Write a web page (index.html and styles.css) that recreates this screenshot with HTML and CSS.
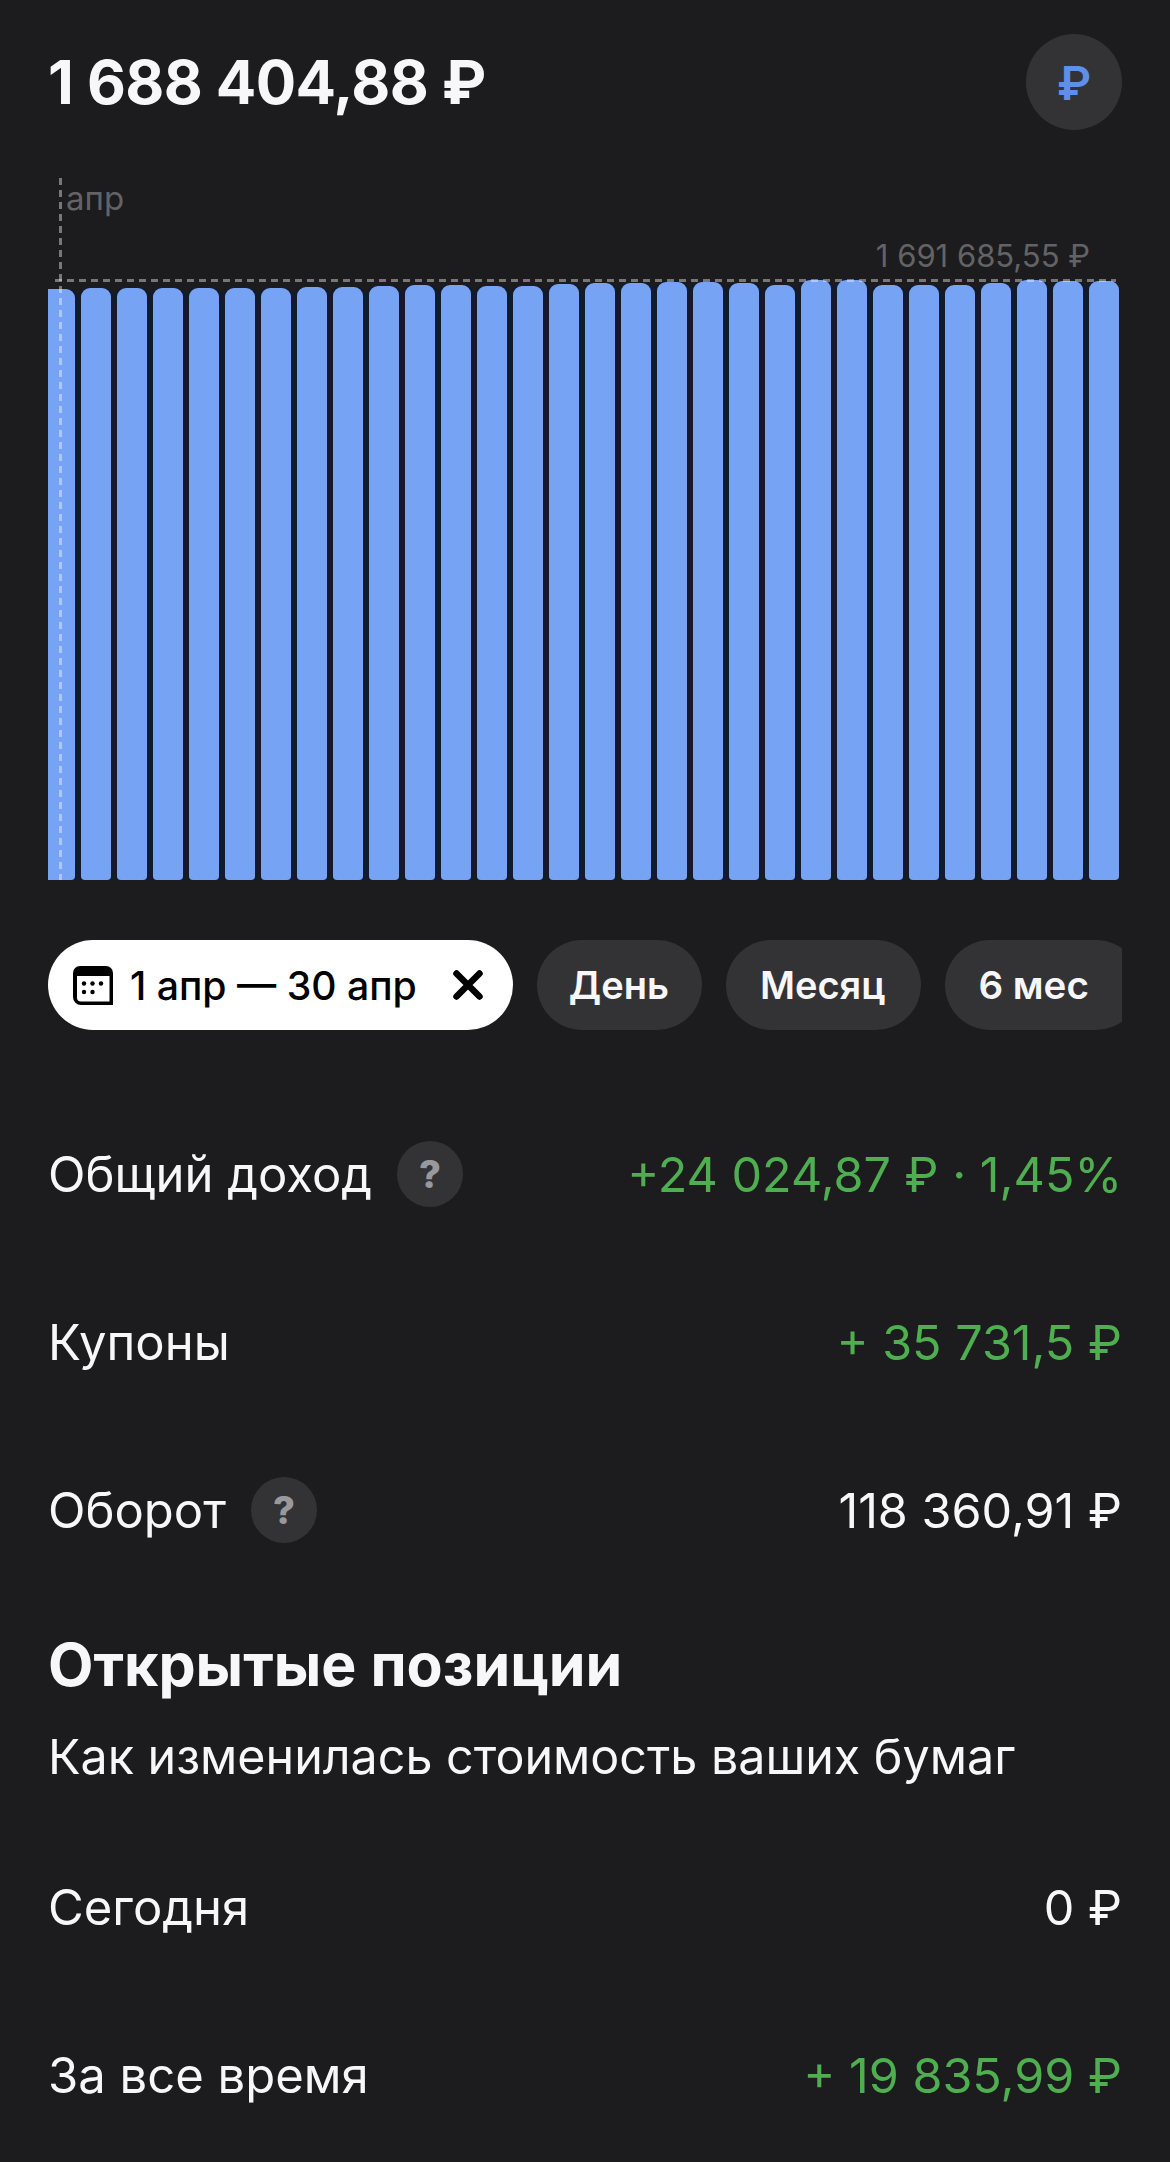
FILE: index.html
```html
<!DOCTYPE html>
<html lang="ru">
<head>
<meta charset="utf-8">
<title>Доходность</title>
<link rel="stylesheet" href="styles.css">
</head>
<body>
<main class="page">
  <header class="header">
    <h1 class="balance">1&nbsp;688&nbsp;404,88&nbsp;₽</h1>
    <div class="currency"><span>₽</span></div>
  </header>

  <section class="chart">
    <div class="bars">
      <div class="bar bar-first" style="height:591px"></div>
      <div class="bar" style="height:592px"></div>
      <div class="bar" style="height:592px"></div>
      <div class="bar" style="height:592px"></div>
      <div class="bar" style="height:592px"></div>
      <div class="bar" style="height:592px"></div>
      <div class="bar" style="height:592px"></div>
      <div class="bar" style="height:593px"></div>
      <div class="bar" style="height:593px"></div>
      <div class="bar" style="height:594px"></div>
      <div class="bar" style="height:595px"></div>
      <div class="bar" style="height:595px"></div>
      <div class="bar" style="height:594px"></div>
      <div class="bar" style="height:594px"></div>
      <div class="bar" style="height:596px"></div>
      <div class="bar" style="height:597px"></div>
      <div class="bar" style="height:597px"></div>
      <div class="bar" style="height:598px"></div>
      <div class="bar" style="height:598px"></div>
      <div class="bar" style="height:597px"></div>
      <div class="bar" style="height:595px"></div>
      <div class="bar" style="height:600px"></div>
      <div class="bar" style="height:600px"></div>
      <div class="bar" style="height:595px"></div>
      <div class="bar" style="height:595px"></div>
      <div class="bar" style="height:595px"></div>
      <div class="bar" style="height:597px"></div>
      <div class="bar" style="height:600px"></div>
      <div class="bar" style="height:599px"></div>
      <div class="bar bar-last" style="height:599px"></div>
    </div>
    <div class="guide-v"></div>
    <div class="guide-h"></div>
    <span class="label-month">апр</span>
    <span class="label-max">1&nbsp;691&nbsp;685,55&nbsp;₽</span>
  </section>

  <nav class="chips">
    <div class="chip chip-active">
      <svg class="icon-cal" viewBox="0 0 40 39" aria-hidden="true">
        <path d="M7 0H33A7 7 0 0 1 40 7V39H8A8 8 0 0 1 0 31V7A7 7 0 0 1 7 0Z" fill="#000"/>
        <path d="M4 10H36.500V35.500H8A4 4 0 0 1 4 31.500Z" fill="#fff"/>
        <g fill="#000"><circle cx="11" cy="17.500" r="2.200"/><circle cx="19.500" cy="17.500" r="2.200"/><circle cx="28" cy="17.500" r="2.200"/><circle cx="11" cy="26" r="2.200"/><circle cx="19.500" cy="26" r="2.200"/></g>
      </svg>
      <span class="chip-text">1 апр — 30 апр</span>
      <svg class="icon-close" viewBox="0 0 30 30" aria-hidden="true">
        <path d="M3.500 3.500L26.500 26.500M26.500 3.500L3.500 26.500" stroke="#000" stroke-width="6.500" stroke-linecap="round" fill="none"/>
      </svg>
    </div>
    <div class="chip chip-day">День</div>
    <div class="chip chip-month">Месяц</div>
    <div class="chip chip-cut">6 мес</div>
  </nav>

  <section class="rows rows-top">
    <div class="row">
      <div class="row-label">Общий доход <span class="hint">?</span></div>
      <div class="row-value positive">+24&nbsp;024,87&nbsp;₽ · 1,45%</div>
    </div>
    <div class="row">
      <div class="row-label">Купоны</div>
      <div class="row-value positive">+ 35&nbsp;731,5&nbsp;₽</div>
    </div>
    <div class="row">
      <div class="row-label">Оборот <span class="hint">?</span></div>
      <div class="row-value">118&nbsp;360,91&nbsp;₽</div>
    </div>
  </section>

  <section class="positions">
    <h2 class="positions-title">Открытые позиции</h2>
    <p class="positions-sub">Как изменилась стоимость ваших бумаг</p>
  </section>

  <section class="rows">
    <div class="row">
      <div class="row-label">Сегодня</div>
      <div class="row-value">0&nbsp;₽</div>
    </div>
    <div class="row">
      <div class="row-label">За все время</div>
      <div class="row-value positive">+ 19&nbsp;835,99&nbsp;₽</div>
    </div>
  </section>
</main>
</body>
</html>
```
FILE: styles.css
```css
* { box-sizing: border-box; }
html, body { margin: 0; padding: 0; }
body {
  background: #1c1c1e;
  color: #f7f7f9;
  font-family: Inter, "Noto Sans", sans-serif;
}
.page { width: 1170px; height: 2162px; overflow: hidden; }

.header {
  display: flex;
  justify-content: space-between;
  align-items: center;
  padding: 34px 48px 0 48px;
}
.balance { margin: 0; font-size: 60px; font-weight: 700; line-height: 96px; letter-spacing: -0.6px; }
.currency {
  width: 96px;
  height: 96px;
  border-radius: 50%;
  background: #333336;
  color: #5f8fe8;
  font-size: 47px;
  font-weight: 600;
  display: flex;
  align-items: center;
  justify-content: center;
}

.chart { position: relative; height: 702px; margin-top: 48px; padding-left: 48px; }
.bars { display: flex; align-items: flex-end; gap: 6px; height: 100%; width: 1071px; }
.bar {
  flex: 0 0 30px;
  background: #77a3f5;
  border-radius: 9px 9px 4px 4px;
  box-shadow: 3px 0 0 #121a2c, -3px 0 0 #121a2c;
}
.bar-first { flex-basis: 27px; border-radius: 0 9px 4px 0; box-shadow: 3px 0 0 #121a2c; }
.bar-last { box-shadow: -3px 0 0 #121a2c; }
.guide-v {
  position: absolute;
  left: 59px;
  top: 0;
  bottom: 0;
  width: 3px;
  background: repeating-linear-gradient(to bottom, rgba(255,255,255,.4) 0 7px, transparent 7px 12px);
}
.guide-h {
  position: absolute;
  left: 55px;
  top: 101px;
  width: 1061px;
  height: 3px;
  background: repeating-linear-gradient(to right, rgba(255,255,255,.4) 0 7px, transparent 7px 12px);
}
.label-month, .label-max {
  position: absolute;
  color: #636366;
  line-height: 40px;
}
.label-month { left: 66px; top: 0; font-size: 33px; }
.label-max { right: 80px; top: 58px; font-size: 31px; }

.chips { display: flex; gap: 24px; margin: 60px 48px 0 48px; overflow: hidden; }
.chip {
  flex: none;
  height: 90px;
  padding: 0 33px;
  border-radius: 45px;
  background: #333336;
  font-size: 38px;
  font-weight: 600;
  display: flex;
  align-items: center;
}
.chip-day { padding: 0 33px 0 32px; }
.chip-month { padding: 0 36px 0 34px; }
.chip-cut { padding-right: 52px; font-size: 38.6px; }
.chip-active { background: #fff; color: #000; padding: 0 30px 0 25px; font-size: 39.2px; font-weight: 500; }
.icon-cal { width: 40px; height: 39px; flex: none; margin-right: 17px; }
.chip-text { flex: none; }
.icon-close { width: 30px; height: 30px; flex: none; margin-left: 36px; }

.rows-top { margin-top: 60px; }
.row {
  height: 168px;
  padding: 0 48px;
  display: flex;
  justify-content: space-between;
  align-items: center;
  font-size: 49px;
  font-weight: 400;
}
.row-label { display: flex; align-items: center; gap: 25px; }
.row-value { text-align: right; font-size: 48.5px; }
.positive { color: #4fae50; }
.hint {
  width: 66px;
  height: 66px;
  border-radius: 50%;
  background: #333336;
  color: #98989d;
  font-size: 38px;
  font-weight: 800;
  display: flex;
  align-items: center;
  justify-content: center;
}

.positions { height: 229px; padding: 0 48px; }
.positions-title { margin: 0; font-size: 59px; font-weight: 700; line-height: 72px; padding-top: 35px; height: 109px; }
.positions-sub { margin: 0; font-size: 48.4px; line-height: 60px; padding-top: 24px; }
```
